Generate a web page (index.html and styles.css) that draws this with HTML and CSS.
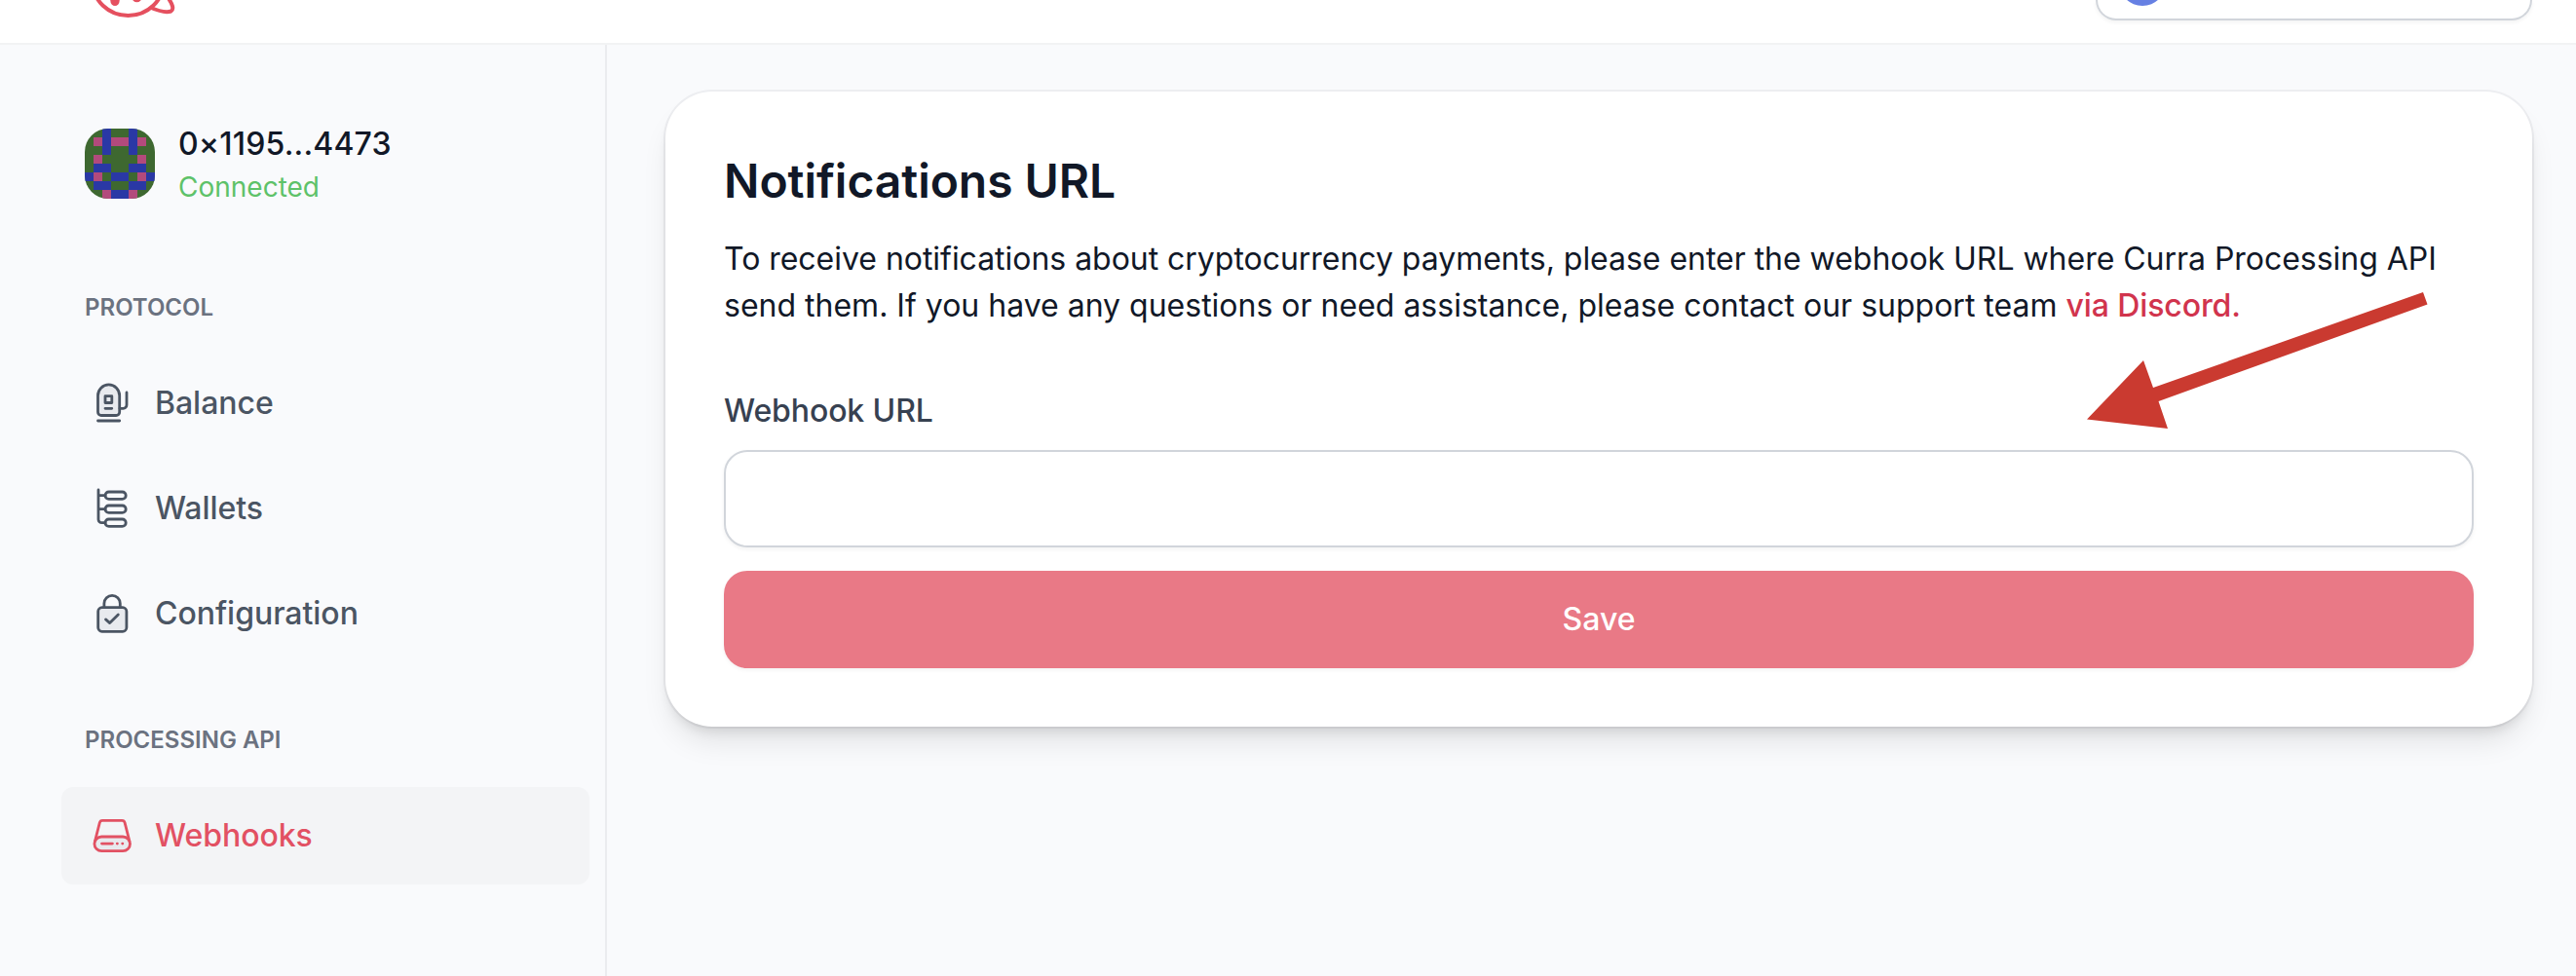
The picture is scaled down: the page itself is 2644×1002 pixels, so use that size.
FILE: index.html
```html
<!DOCTYPE html>
<html lang="en">
<head>
<meta charset="utf-8">
<title>Webhooks</title>
<link rel="stylesheet" href="styles.css">
</head>
<body>
<header class="topbar">
  <svg class="logo" width="100" height="44" viewBox="0 0 100 44">
    <g fill="none" stroke="#e5505f" stroke-width="4">
      <ellipse cx="51.5" cy="-19" rx="36.5" ry="35"/>
      <path d="M74 7.5C82 11 90 13.5 95.500 11.500C99 9.500 97 4 92-3"/>
    </g>
    <g fill="#e5505f"><ellipse cx="38" cy="0.500" rx="4.700" ry="5.500"/><ellipse cx="60.500" cy="-3.200" rx="5.200" ry="5.500"/></g>
  </svg>
  <div class="network"><span class="network-icon"></span></div>
</header>
<div class="layout">
  <aside class="sidebar">
    <div class="account">
      <svg class="avatar" viewBox="0 0 8 8" shape-rendering="crispEdges">
        <rect width="8" height="8" fill="#3e6830"/>
        <path fill="#2a38a5" d="M2 0h1v3H2zM5 0h1v3H5zM1 4h2v1H1zM5 4h2v1H5zM0 5h1v1H0zM3 5h2v1H3zM7 5h1v1H7zM1 6h2v1H1zM5 6h2v1H5zM3 7h2v1H3z"/>
        <path fill="#b34a7c" d="M1 1h1v1H1zM3 1h2v1H3zM6 1h1v1H6zM1 3h1v1H1zM6 3h1v1H6zM1 5h1v1H1zM6 5h1v1H6zM2 7h1v1H2zM5 7h1v1H5z"/>
      </svg>
      <div class="account-text">
        <div class="address">0×1195...4473</div>
        <div class="status">Connected</div>
      </div>
    </div>
    <h2 class="group-title">PROTOCOL</h2>
    <nav class="menu">
      <a class="item">
        <svg class="icon" viewBox="0 1 40 40">
          <path class="tint" d="M5.500 13a11.100 11.100 0 0 1 22.200 0v17a3.500 3.500 0 0 1-3.500 3.500H9A3.500 3.500 0 0 1 5.500 30z"/>
          <path d="M13 13.700h6.800v6.800H13zM13 26.300h6.800M5.500 39h22.200M28 26.300h3.500a3.500 3.500 0 0 0 3.500-3.500V10"/>
        </svg>
        <span>Balance</span>
      </a>
      <a class="item">
        <svg class="icon" viewBox="0 1 40 40">
          <path d="M6 2v30.200a3.500 3.500 0 0 0 3.500 3.500H13M6 7.700h7M6 21.700h7"/>
          <rect x="13" y="4" width="21.200" height="7.400" rx="3.700"/>
          <rect x="13" y="18" width="21.200" height="7.400" rx="3.700"/>
          <rect x="13" y="32" width="21.200" height="7.400" rx="3.700"/>
        </svg>
        <span>Wallets</span>
      </a>
      <a class="item">
        <svg class="icon" viewBox="0 1 40 40">
          <rect class="tint" x="5.700" y="14.700" width="29.200" height="24.600" rx="4"/>
          <path d="M11.900 14.500v-4a8.200 8.200 0 0 1 16.400 0v4M13.500 26.900l4.200 3.700 8.600-8.600"/>
        </svg>
        <span>Configuration</span>
      </a>
    </nav>
    <h2 class="group-title second">PROCESSING API</h2>
    <nav class="menu">
      <a class="item active">
        <svg class="icon" viewBox="0 0 40 40">
          <rect class="tint" x="1.900" y="21" width="36.600" height="14.700" rx="7.350"/>
          <path d="M2.500 25.500L7.300 6.600A3 3 0 0 1 10.200 4.300h20a3 3 0 0 1 2.900 2.300L37.900 25.500M9.500 28.100h10.900M25.300 28.100h.1M30.700 28.100h.1"/>
        </svg>
        <span>Webhooks</span>
      </a>
    </nav>
  </aside>
  <main class="content">
    <section class="card">
      <h1 class="title">Notifications URL</h1>
      <p class="description">To receive notifications about cryptocurrency payments, please enter the webhook URL where Curra Processing API<br>send them. If you have any questions or need assistance, please contact our support team <a class="link">via Discord.</a></p>
      <label class="label" for="webhook">Webhook URL</label>
      <input class="input" id="webhook" type="text">
      <button class="save" type="button">Save</button>
      <svg class="arrow" width="352" height="142" viewBox="0 0 352 142">
        <path fill="#ca3a30" d="M2 132.500L60 72l10 28L347 2l4.500 12.500L75.500 114l9.500 28z"/>
      </svg>
    </section>
  </main>
</div>
</body>
</html>
```
FILE: styles.css
```css
* { box-sizing: border-box; }
body {
  margin: 0;
  height: 1002px;
  display: flex;
  flex-direction: column;
  overflow: hidden;
  background: #f9fafc;
  color: #111827;
  font: 400 32px/48px Inter, sans-serif;
}
h1, h2, p { margin: 0; }
.topbar {
  height: 46px;
  flex: none;
  display: flex;
  justify-content: space-between;
  align-items: flex-start;
  padding: 0 45px 0 80px;
  background: #fff;
  border-bottom: 2px solid #f2f3f4;
}
.network {
  width: 448px;
  height: 21px;
  padding-left: 22px;
  border: 2px solid #d1d5db;
  border-top: 0;
  border-radius: 0 0 24px 24px;
  box-shadow: 0 2px 4px rgba(0, 0, 0, .05);
  overflow: hidden;
}
.network-icon {
  display: block;
  width: 48px;
  height: 48px;
  margin-top: -42px;
  border-radius: 50%;
  background: #6680e3;
}
.layout { flex: 1; display: flex; min-height: 0; }
.sidebar {
  width: 623px;
  flex: none;
  padding: 78px 16px 0 63px;
  border-right: 2px solid #ebecef;
}
.account { display: flex; gap: 24px; padding: 0 24px; align-items: center; height: 88px; }
.avatar { width: 72px; height: 72px; border-radius: 24px; }
.address { font-weight: 500; line-height: 48px; letter-spacing: .16px; }
.status { font-size: 28px; line-height: 40px; color: #5ec269; }
.group-title {
  margin: 88px 0 32px;
  padding-left: 24px;
  font-size: 24px;
  line-height: 32px;
  font-weight: 600;
  color: #6b7280;
}
.group-title.second { margin: 64px 0 32px; }
.menu { display: flex; flex-direction: column; gap: 8px; }
.item {
  height: 100px;
  display: flex;
  align-items: center;
  gap: 24px;
  padding-left: 32px;
  border-radius: 12px;
  font-weight: 500;
  letter-spacing: -.04px;
  color: #4b5563;
}
.item.active { width: 542px; background: #f3f4f6; color: #e25163; }
.icon {
  width: 40px;
  height: 40px;
  overflow: visible;
  fill: none;
  stroke: currentColor;
  stroke-width: 2.8;
  stroke-linecap: round;
  stroke-linejoin: round;
}
.tint { fill: #e8eaee; }
.content { flex: 1; padding: 48px 45px 0 60px; }
.card {
  position: relative;
  height: 652px;
  padding: 60px;
  display: flex;
  flex-direction: column;
  background: #fff;
  border-radius: 48px;
  box-shadow: 0 0 0 2px rgba(17, 24, 39, .05), 0 20px 30px -6px rgba(0, 0, 0, .1), 0 8px 12px -4px rgba(0, 0, 0, .1);
}
.title { font-size: 48px; line-height: 64px; font-weight: 600; letter-spacing: -.05px; }
.description { margin-top: 24px; white-space: nowrap; }
.description::first-line { letter-spacing: -.03px; }
.link { color: #d1344d; font-weight: 500; letter-spacing: -.1px; }
.label { margin-top: 60px; font-weight: 500; letter-spacing: -.1px; color: #374151; }
.input {
  height: 100px;
  margin-top: 16px;
  padding: 0 24px;
  border: 2px solid #d1d5db;
  border-radius: 24px;
  box-shadow: 0 2px 4px rgba(0, 0, 0, .05);
  font: inherit;
}
.save {
  height: 100px;
  margin-top: 24px;
  border: 0;
  border-radius: 24px;
  background: #e97986;
  color: #fff;
  font: inherit;
  font-weight: 500;
  box-shadow: 0 2px 4px rgba(0, 0, 0, .05);
}
/* callout laid over the card */
.arrow { position: absolute; left: 1457px; top: 204px; }
```
